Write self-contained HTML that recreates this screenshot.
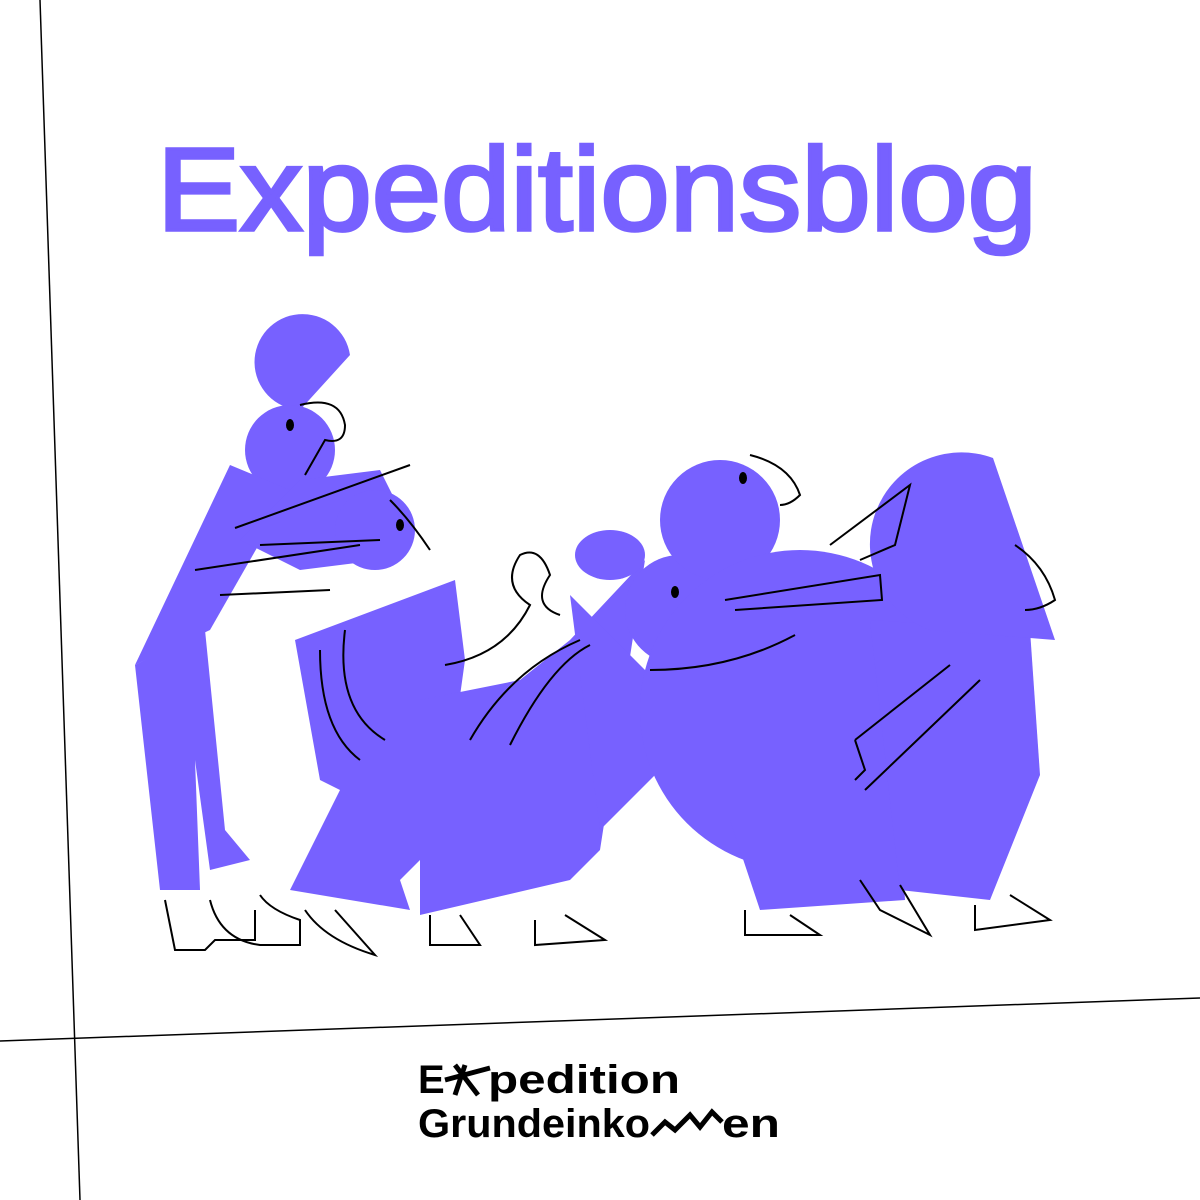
<!DOCTYPE html>
<html><head><meta charset="utf-8"><style>
html,body{margin:0;padding:0;background:#fff;width:1200px;height:1200px;overflow:hidden}
svg{display:block}
</style></head><body>
<svg width="1200" height="1200" viewBox="0 0 1200 1200" xmlns="http://www.w3.org/2000/svg">
<rect width="1200" height="1200" fill="#fff"/>
<line x1="40" y1="0" x2="80" y2="1200" stroke="#000" stroke-width="1.5"/>
<line x1="0" y1="1041" x2="1200" y2="998" stroke="#000" stroke-width="1.5"/>
<text x="157" y="230" font-family="Liberation Sans, sans-serif" font-weight="normal" font-size="118" fill="#7761ff" stroke="#7761ff" stroke-width="3.5" textLength="880" lengthAdjust="spacingAndGlyphs">Expeditionsblog</text>
<g fill="#7761ff">
<path d="M350 355 A48 48 0 1 0 300 410 Z"/>
<circle cx="290" cy="450" r="45"/>
<polygon points="230,465 290,490 210,630 135,665"/>
<polygon points="135,665 205,630 225,830 250,860 210,870 195,760 200,890 160,890"/>
<polygon points="300,480 380,470 395,500 380,560 300,570 240,540"/>
<circle cx="375" cy="530" r="40"/>
<polygon points="295,640 455,580 465,660 440,840 400,880 410,910 290,890 340,790 320,780"/>
<polygon points="420,700 520,680 570,640 645,560 600,850 570,880 420,915"/>
<polygon points="570,595 645,670 720,710 600,830"/>
<ellipse cx="610" cy="555" rx="35" ry="25"/>
<circle cx="680" cy="610" r="55"/>
<circle cx="720" cy="520" r="60"/>
<circle cx="800" cy="710" r="160"/>
<polygon points="730,820 900,820 905,900 760,910"/>
<polygon points="870,620 1030,630 1040,775 1030,800 990,900 900,890"/>
<path d="M993 458 L1055 640 L930 630 A70 70 0 0 1 993 458 Z"/>
</g>
<g fill="none" stroke="#000" stroke-width="2">
<path d="M300 405 q40 -10 45 20 q0 20 -20 15 l-20 35"/>
<path d="M235 528 L410 465"/><path d="M260 545 L380 540"/><path d="M195 570 L360 545"/>
<path d="M220 595 L330 590"/>
<path d="M390 500 q20 20 40 50"/>
<path d="M345 630 q-10 80 40 110"/><path d="M320 650 q0 80 40 110"/>
<path d="M445 665 q60 -10 85 -60 q-30 -20 -10 -50 q20 -10 30 20 q-20 30 10 40"/>
<path d="M470 740 q40 -70 110 -100"/><path d="M510 745 q40 -80 80 -100"/>
<path d="M725 600 L880 575 L882 600 L735 610"/>
<path d="M650 670 q80 0 145 -35"/>
<path d="M750 455 q40 10 50 40 q-10 10 -20 10"/>
<path d="M830 545 L910 485 L895 545 L860 560"/>
<path d="M855 740 L950 665"/><path d="M865 790 L980 680"/><path d="M855 740 l10 30 l-10 10"/>
<path d="M1015 545 q30 20 40 55 q-15 10 -30 10"/>
<path d="M165 900 l10 50 l30 0 l10 -10 l40 0 l0 -30"/>
<path d="M210 900 q10 40 50 45 l40 0 l0 -25 q-30 -10 -40 -25"/>
<path d="M305 910 q20 30 70 45 l-40 -45"/><path d="M430 915 l0 30 l50 0 l-20 -30"/>
<path d="M535 920 l0 25 l70 -5 l-40 -25"/>
<path d="M745 910 l0 25 l75 0 l-30 -20"/><path d="M860 880 l20 30 l50 25 l-30 -50"/>
<path d="M975 905 l0 25 l75 -10 l-40 -25"/>
</g>
<g fill="#000"><ellipse cx="290" cy="425" rx="4" ry="6"/><ellipse cx="400" cy="525" rx="4" ry="6"/><ellipse cx="675" cy="592" rx="4" ry="6"/><ellipse cx="743" cy="478" rx="4" ry="6"/></g>
<text x="418" y="1093" font-family="Liberation Sans, sans-serif" font-weight="bold" font-size="40" fill="#000">E</text>
<text x="488" y="1093" font-family="Liberation Sans, sans-serif" font-weight="bold" font-size="40" fill="#000" textLength="192" lengthAdjust="spacingAndGlyphs">pedition</text>
<path d="M445 1080 L490 1068 M455 1065 L478 1095 M465 1065 L455 1095" stroke="#000" stroke-width="5" fill="none"/>
<text x="418" y="1137" font-family="Liberation Sans, sans-serif" font-weight="bold" font-size="40" fill="#000" textLength="232" lengthAdjust="spacingAndGlyphs">Grundeinko</text>
<path d="M652 1135 L665 1122 L675 1130 L690 1115 L700 1127 L712 1112 L722 1122" stroke="#000" stroke-width="5" fill="none"/>
<text x="722" y="1137" font-family="Liberation Sans, sans-serif" font-weight="bold" font-size="40" fill="#000" textLength="58" lengthAdjust="spacingAndGlyphs">en</text>
</svg>
</body></html>
